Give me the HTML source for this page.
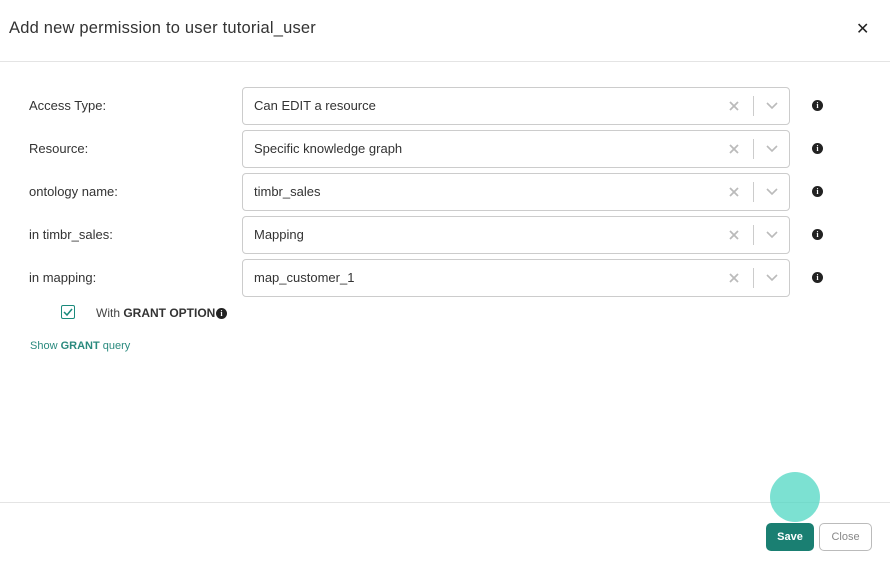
<!DOCTYPE html>
<html><head><meta charset="utf-8"><style>
*{box-sizing:border-box;margin:0;padding:0}
body{width:890px;height:563px;background:#fff;font-family:"Liberation Sans",sans-serif;color:#333;position:relative;overflow:hidden}
.title{position:absolute;left:9px;top:19px;font-size:16.5px;color:#333;letter-spacing:0.2px}
.x{position:absolute;left:856px;top:19px;font-size:16px;color:#222}
.hr{position:absolute;left:0;width:890px;height:1px;background:#e4e4e4}
.lbl{position:absolute;left:29px;font-size:13px;color:#333}
.sel{position:absolute;left:242px;width:548px;height:38px;border:1px solid #ccc;border-radius:4px}
.sel span{position:absolute;left:11px;top:10px;font-size:13px;color:#333}
.sel svg.c{position:absolute;left:486px;top:13px}
.sel .sep{position:absolute;left:510px;top:8px;width:1px;height:20px;background:#ccc}
.sel svg.d{position:absolute;left:522px;top:13px}
.info{position:absolute;width:11px;height:11px;border-radius:50%;background:#222;color:#fff;font-size:8px;font-weight:bold;text-align:center;line-height:11px;font-family:"Liberation Serif",serif}
</style></head><body>
<div class="title">Add new permission to user tutorial_user</div>
<div class="x">✕</div>
<div class="hr" style="top:61px"></div>

<div class="lbl" style="top:98px">Access Type:</div>
<div class="sel" style="top:87px"><span>Can EDIT a resource</span><svg class="c" width="10" height="10"><path d="M1 1l8 8M9 1l-8 8" stroke="#bbb" stroke-width="1.8"/></svg><i class="sep"></i><svg class="d" width="14" height="10"><path d="M2 2l5 5 5-5" stroke="#bbb" stroke-width="1.6" fill="none"/></svg></div>
<div class="info" style="left:812px;top:100px">i</div>

<div class="lbl" style="top:141px">Resource:</div>
<div class="sel" style="top:130px"><span>Specific knowledge graph</span><svg class="c" width="10" height="10"><path d="M1 1l8 8M9 1l-8 8" stroke="#bbb" stroke-width="1.8"/></svg><i class="sep"></i><svg class="d" width="14" height="10"><path d="M2 2l5 5 5-5" stroke="#bbb" stroke-width="1.6" fill="none"/></svg></div>
<div class="info" style="left:812px;top:143px">i</div>

<div class="lbl" style="top:184px">ontology name:</div>
<div class="sel" style="top:173px"><span>timbr_sales</span><svg class="c" width="10" height="10"><path d="M1 1l8 8M9 1l-8 8" stroke="#bbb" stroke-width="1.8"/></svg><i class="sep"></i><svg class="d" width="14" height="10"><path d="M2 2l5 5 5-5" stroke="#bbb" stroke-width="1.6" fill="none"/></svg></div>
<div class="info" style="left:812px;top:186px">i</div>

<div class="lbl" style="top:227px">in timbr_sales:</div>
<div class="sel" style="top:216px"><span>Mapping</span><svg class="c" width="10" height="10"><path d="M1 1l8 8M9 1l-8 8" stroke="#bbb" stroke-width="1.8"/></svg><i class="sep"></i><svg class="d" width="14" height="10"><path d="M2 2l5 5 5-5" stroke="#bbb" stroke-width="1.6" fill="none"/></svg></div>
<div class="info" style="left:812px;top:229px">i</div>

<div class="lbl" style="top:270px">in mapping:</div>
<div class="sel" style="top:259px"><span>map_customer_1</span><svg class="c" width="10" height="10"><path d="M1 1l8 8M9 1l-8 8" stroke="#bbb" stroke-width="1.8"/></svg><i class="sep"></i><svg class="d" width="14" height="10"><path d="M2 2l5 5 5-5" stroke="#bbb" stroke-width="1.6" fill="none"/></svg></div>
<div class="info" style="left:812px;top:272px">i</div>

<div style="position:absolute;left:61px;top:305px;width:14px;height:14px;border:1.5px solid #1a8a7c;border-radius:2px"><svg width="12" height="12" style="position:absolute;left:0;top:0"><path d="M2 6l3 3 5-6" stroke="#1a8a7c" stroke-width="1.5" fill="none"/></svg></div>
<div style="position:absolute;left:96px;top:306px;font-size:12px;color:#444">With <b style="color:#333">GRANT OPTION</b></div>
<div class="info" style="left:216px;top:308px">i</div>
<div style="position:absolute;left:30px;top:340px;font-size:11px;color:#2a8a7e">Show <b>GRANT</b> query</div>

<div class="hr" style="top:502px"></div>
<div style="position:absolute;left:766px;top:523px;width:48px;height:28px;background:#1a7f72;border-radius:5px;color:#fff;font-size:11px;font-weight:bold;text-align:center;line-height:28px">Save</div>
<div style="position:absolute;left:819px;top:523px;width:53px;height:28px;border:1px solid #bbb;border-radius:5px;color:#888;font-size:11px;text-align:center;line-height:26px">Close</div>
<div style="position:absolute;left:770px;top:472px;width:50px;height:50px;border-radius:50%;background:rgba(80,215,195,0.75)"></div>
</body></html>
